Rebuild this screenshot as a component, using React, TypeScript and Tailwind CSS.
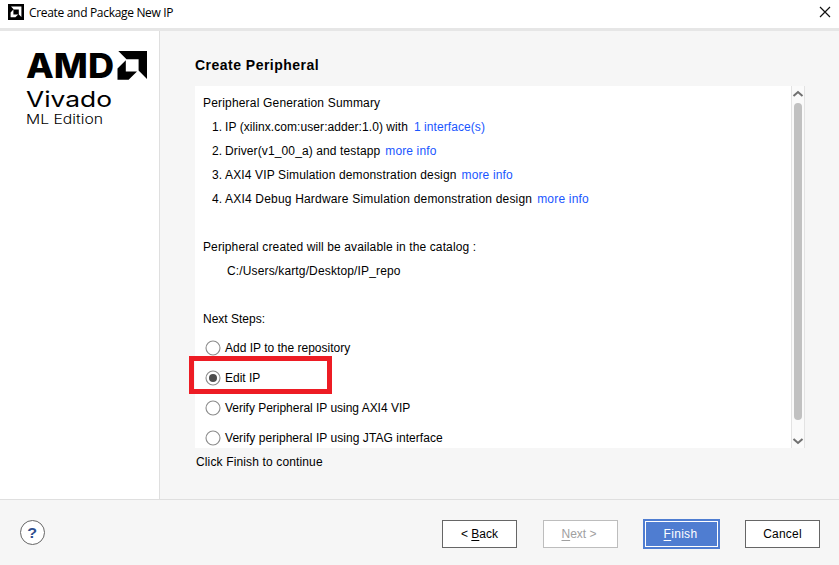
import React from "react";

type Line = { n: string; text: string; link: string; track: string; gap: string };

const LINES: Line[] = [
  { n: "1.", text: "IP (xilinx.com:user:adder:1.0) with", link: "1 interface(s)", track: "tracking-[0.07px]", gap: "ml-[6px]" },
  { n: "2.", text: "Driver(v1_00_a) and testapp", link: "more info", track: "tracking-[0.12px]", gap: "ml-[5px]" },
  { n: "3.", text: "AXI4 VIP Simulation demonstration design", link: "more info", track: "tracking-[0.14px]", gap: "ml-[5px]" },
  { n: "4.", text: "AXI4 Debug Hardware Simulation demonstration design", link: "more info", track: "tracking-[0.19px]", gap: "ml-[5px]" },
];

const STEPS = [
  { text: "Add IP to the repository", track: "tracking-normal" },
  { text: "Edit IP", track: "tracking-normal" },
  { text: "Verify Peripheral IP using AXI4 VIP", track: "tracking-[-0.02px]" },
  { text: "Verify peripheral IP using JTAG interface", track: "tracking-[0.05px]" },
];

function Logo() {
  return (
    <svg width="159" height="110" viewBox="0 31 159 110" className="block">
      <text x="26" y="78" fontFamily="Inter, sans-serif" fontWeight="800" fontSize="34.5" textLength="88" lengthAdjust="spacingAndGlyphs">AMD</text>
      <path d="M118.3 51H147V79L138.6 70.6V59.2H126.5Z" />
      <path d="M125.8 60.2L117.5 68.4V79.7H128.6L137 71.4H125.8Z" />
      <text x="26" y="107" fontFamily="Inter, sans-serif" fontSize="22" textLength="86" lengthAdjust="spacingAndGlyphs">Vivado</text>
      <text x="26" y="123.5" fontFamily="Inter, sans-serif" fontWeight="300" fontSize="13.5" textLength="77" lengthAdjust="spacingAndGlyphs">ML Edition</text>
    </svg>
  );
}

function Radio({ on }: { on: boolean }) {
  return (
    <svg width="16" height="16" viewBox="0 0 16 16" className="mr-[4px] shrink-0">
      <circle cx="8" cy="8" r="7" fill="#fff" stroke="#8c8c8c" strokeWidth="1.1" />
      {on && <circle cx="8" cy="8" r="4" fill="#4d4d4d" />}
    </svg>
  );
}

function Chevron({ down }: { down?: boolean }) {
  return (
    <svg width="12" height="8" viewBox="0 0 12 8" className={down ? "rotate-180" : ""}>
      <path d="M1.5 6L6 2L10.5 6" fill="none" stroke="#707070" strokeWidth="2" />
    </svg>
  );
}

export default function App() {
  return (
    <div className="flex h-[565px] w-[839px] flex-col overflow-hidden bg-[#f6f6f6] font-['Liberation_Sans',Arial,sans-serif] text-[12px] leading-[24px] text-black">
      <header className="flex h-[31px] shrink-0 items-start justify-between border-b-3 border-[#e6e6e6] bg-white">
        <div className="flex pt-[4px] pl-[8px]">
          <svg width="16" height="16" viewBox="0 0 16 16">
            <path d="M0 0H16V16H0Z" />
            <path d="M3 2.6H13.4V13L10.8 10.4V5.4H5.8Z M5.4 5.6L2.6 8.4V13.2H7.4L10.2 10.4H5.4Z" fill="#fff" />
          </svg>
          <span className="ml-[5px] font-['Open_Sans',sans-serif] text-[12px] leading-[17px] tracking-[-0.32px]">Create and Package New IP</span>
        </div>
        <svg width="12" height="12" viewBox="0 0 12 12" className="mt-[6px] mr-[8px]">
          <path d="M1 1L11 11M11 1L1 11" stroke="#111" strokeWidth="1.2" />
        </svg>
      </header>

      <main className="flex h-[468px] shrink-0">
        <aside className="w-[160px] shrink-0 border-r border-[#dfdfdf] bg-white">
          <Logo />
        </aside>
        <section className="flex flex-1 flex-col pl-[35px]">
          <h1 className="mt-[22px] h-[33px] text-[14px] font-bold leading-[24px] tracking-[0.48px]">Create Peripheral</h1>
          <div className="flex h-[362px] w-[610px] bg-white">
            <div className="flex-1 pt-[5px] pl-[8px]">
              <p className="tracking-[0.18px]">Peripheral Generation Summary</p>
              {LINES.map((l) => (
                <p key={l.n} className={"flex pl-[9px] whitespace-pre " + l.track}>
                  <span className="w-[13px]">{l.n}</span>
                  <span>{l.text}</span>
                  <a className={"text-[#1a56ff] " + l.gap}>{l.link}</a>
                </p>
              ))}
              <p className="mt-[24px] tracking-[0.12px]">Peripheral created will be available in the catalog :</p>
              <p className="pl-[24px] tracking-[0.14px]">C:/Users/kartg/Desktop/IP_repo</p>
              <p className="mt-[24px]">Next Steps:</p>
              <div className="mt-[2px]">
                {STEPS.map((s, i) => (
                  <div key={s.text} className="relative flex h-[30px] items-center pl-[2px]">
                    <Radio on={i === 1} />
                    <span className={s.track}>{s.text}</span>
                    {i === 1 && (
                      <div className="absolute -top-[7px] -left-[14px] h-[38px] w-[143px] border-5 border-[#ed1c24]" />
                    )}
                  </div>
                ))}
              </div>
            </div>
            <div className="flex w-[14px] flex-col items-center border-x border-[#e3e3e3] bg-[#fafafa] pt-[4px]">
              <Chevron />
              <div className="mt-[5px] mb-[17px] w-[8px] flex-1 rounded-full bg-[#c1c1c1]" />
              <Chevron down />
              <div className="h-[3px]" />
            </div>
          </div>
          <p className="mt-[2px] pl-[1px] tracking-[0.14px]">Click Finish to continue</p>
        </section>
      </main>

      <footer className="flex flex-1 items-start border-t border-[#dfdfdf] pl-[20px]">
        <div className="mt-[20px] flex size-[25px] items-center justify-center rounded-full border border-[#666] bg-white text-[14px] font-bold text-[#2f4f8f]"><span className="scale-x-115">?</span></div>
        <div className="mt-[20px] ml-[397px] flex">
          <button className="h-[28px] w-[75px] border border-[#666] bg-white">&lt; <u className="underline-offset-2">B</u>ack</button>
          <button className="ml-[26px] h-[28px] w-[75px] border border-[#bdbdbd] bg-white pr-[3px] text-[#a0a0a0]"><u className="underline-offset-2">N</u>ext &gt;</button>
          <div className="-mt-px ml-[25px] h-[30px] w-[77px] bg-[#4f7dd1] p-[2px]">
            <button className="block h-[26px] w-[73px] border border-white pr-[2px] tracking-[0.3px] text-white"><u className="underline-offset-2">F</u>inish</button>
          </div>
          <button className="ml-[25px] h-[28px] w-[75px] border border-[#666] bg-white tracking-[0.2px]">Cancel</button>
        </div>
      </footer>
    </div>
  );
}
